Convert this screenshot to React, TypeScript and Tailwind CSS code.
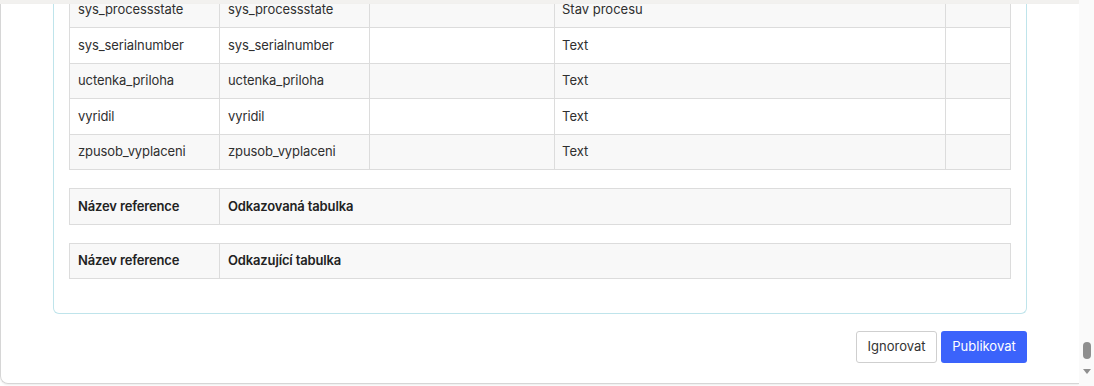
import React from 'react';

const rows = [
  { name: 'sys_processstate', label: 'sys_processstate', type: 'Stav procesu' },
  { name: 'sys_serialnumber', label: 'sys_serialnumber', type: 'Text' },
  { name: 'uctenka_priloha', label: 'uctenka_priloha', type: 'Text' },
  { name: 'vyridil', label: 'vyridil', type: 'Text' },
  { name: 'zpusob_vyplaceni', label: 'zpusob_vyplaceni', type: 'Text' },
];

function RefTable({ title }: { title: string }) {
  return (
    <table className="w-full border-collapse table-fixed">
      <tbody>
        <tr className="h-[35.5px] bg-[#f8f8f8]">
          <td className="w-[150px] border border-[#dcdcdc] pl-[8px] font-semibold tracking-[-0.15px] text-[#222]">Název reference</td>
          <td className="border border-[#dcdcdc] pl-[8px] font-semibold tracking-[-0.15px] text-[#222]">{title}</td>
        </tr>
      </tbody>
    </table>
  );
}

export default function App() {
  return (
    <div
      className="flex w-[1094px] h-[386px] overflow-hidden bg-white text-[13px] text-[#2f2f2f]"
      style={{ fontFamily: 'Inter, "Noto Sans", sans-serif' }}
    >
      <div className="flex flex-col w-[1079px]">
        <div className="h-[4px] bg-[#f2f1ef]" />
        <div className="flex flex-col h-[380px] border-b border-l border-[#d6d6d6] rounded-bl-lg shadow-[0_1px_2px_rgba(0,0,0,0.08)]">
          <div className="flex-1 min-h-0 overflow-hidden pl-[52px] pr-[52px]">
            <div className="flex flex-col gap-[18px] h-full border-x border-b border-[#bfe4eb] rounded-b-md px-[15px] pb-[34px] justify-end">
              <table className="w-full border-collapse table-fixed">
                <colgroup>
                  <col className="w-[150px]" />
                  <col className="w-[150px]" />
                  <col className="w-[185px]" />
                  <col className="w-[391px]" />
                  <col />
                </colgroup>
                <tbody>
                  {rows.map((r, i) => (
                    <tr key={r.name} className={i % 2 === 0 ? 'h-[35.5px] bg-[#f8f8f8]' : 'h-[35.5px] bg-white'}>
                      <td className="border border-[#dcdcdc] pl-[8px] tracking-[-0.1px]">{r.name}</td>
                      <td className="border border-[#dcdcdc] pl-[8px] tracking-[-0.1px]">{r.label}</td>
                      <td className="border border-[#dcdcdc]" />
                      <td className="border border-[#dcdcdc] pl-[7px]">{r.type}</td>
                      <td className="border border-[#dcdcdc]" />
                    </tr>
                  ))}
                </tbody>
              </table>
              <RefTable title="Odkazovaná tabulka" />
              <RefTable title="Odkazující tabulka" />
            </div>
          </div>
          <div className="flex justify-end gap-[4px] pr-[52px] pt-[17px] pb-[20px]">
            <button className="h-[32px] w-[81px] rounded-[3px] border border-[#cfcfcf] bg-white text-[#333]">
              Ignorovat
            </button>
            <button className="h-[32px] w-[86px] rounded-[3px] bg-[#3b63fb] text-white">
              Publikovat
            </button>
          </div>
        </div>
      </div>
      <div className="flex flex-col items-center justify-end w-[15px] bg-[#fafafa] pb-[12px]">
        <div className="w-[8px] h-[17px] rounded-full bg-[#8f8f8f]" />
        <div className="mt-[10px] w-0 h-0 border-x-[4px] border-x-transparent border-t-[5px] border-t-[#8f8f8f]" />
      </div>
    </div>
  );
}
